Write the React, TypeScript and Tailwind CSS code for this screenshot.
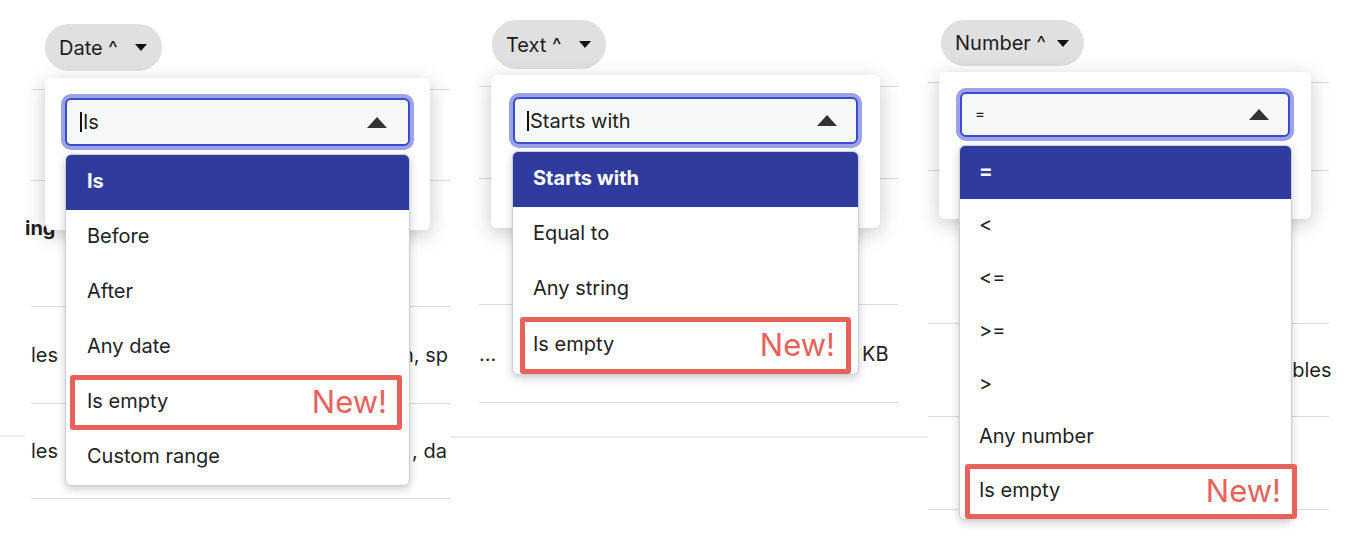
import React from "react";

type Option = { label: string; isNew?: boolean };

const LINE = "border-[#d6dae7]";

function DownTriangle() {
  return (
    <svg width="12" height="7" viewBox="0 0 12 7" className="shrink-0">
      <path d="M0 0H12L6 7Z" fill="#111" />
    </svg>
  );
}

function UpCaret() {
  return (
    <svg width="20" height="11" viewBox="0 0 20 11" className="shrink-0">
      <path d="M0 11L10 0L20 11Z" fill="#333" />
    </svg>
  );
}

function Chip({ label, className }: { label: string; className: string }) {
  return (
    <div
      className={`flex items-center justify-between rounded-full bg-[#e0e0e0] pl-[14px] pr-[15px] text-[20px] text-[#1d1d1d] ${className}`}
    >
      <span>{label} ^</span>
      <DownTriangle />
    </div>
  );
}

function FilterPopover({
  className,
  cardClass,
  inputClass,
  listClass,
  itemClass,
  itemPad,
  newClass,
  valueClass,
  value,
  cursor,
  options,
}: {
  className: string;
  cardClass: string;
  inputClass: string;
  listClass: string;
  itemClass: string;
  itemPad: string;
  newClass: string;
  valueClass: string;
  value: string;
  cursor?: boolean;
  options: Option[];
}) {
  return (
    <div className={`absolute ${className}`}>
      <div className={`rounded-md bg-white shadow-[0_5px_20px_rgba(0,0,0,0.22)] ${cardClass}`}>
        <div className="relative">
          <div
            className={`flex items-center justify-between rounded-md border-2 border-[#3a4bd0] bg-[#f7f8f8] ring-4 ring-[#9ba3e4] ${inputClass}`}
          >
            <div className="flex items-center">
              {cursor && <span className="mr-[1px] h-[20px] w-[2px] bg-[#111]" />}
              <span className={`text-[#1e1e1e] ${valueClass}`}>{value}</span>
            </div>
            <UpCaret />
          </div>
          <div
            className={`absolute z-10 rounded-md border border-[#c9cee0] bg-white shadow-[0_3px_8px_rgba(0,0,0,0.2)] ${listClass}`}
          >
            {options.map((o, i) =>
              o.isNew ? (
                <div
                  key={o.label}
                  className={`flex items-center justify-between rounded-[3px] border-[5px] border-[#e8615b] bg-white pb-[3px] text-[20px] text-[#222] ${itemClass} ${newClass}`}
                >
                  <span>{o.label}</span>
                  <span className="text-[31px] leading-none text-[#e8615b]">New!</span>
                </div>
              ) : i === 0 ? (
                <div
                  key={o.label}
                  className={`flex items-center rounded-t-[5px] bg-[#2f3c9d] pb-[3px] text-[20px] font-bold text-white ${itemClass} ${itemPad}`}
                >
                  {o.label}
                </div>
              ) : (
                <div
                  key={o.label}
                  className={`flex items-center pb-[3px] text-[20px] text-[#222] ${itemClass} ${itemPad}`}
                >
                  {o.label}
                </div>
              )
            )}
          </div>
        </div>
      </div>
    </div>
  );
}

export default function App() {
  return (
    <div className="flex h-[542px] w-[1350px] items-start overflow-hidden bg-white font-[Inter,sans-serif] text-[#1f1f1f]">
      {/* left edge of the date shot */}
      <div className="h-[437px] w-[25px] shrink-0 border-b-2 border-[#ececec]" />

      {/* Date */}
      <div className="relative w-[425px] shrink-0 overflow-hidden">
        <Chip label="Date" className="ml-[20px] mt-[24px] h-[47px] w-[117px]" />
        <div className="mt-[18px] text-[20px]">
          <div className={`ml-[6px] h-[91px] border-t ${LINE}`} />
          <div className={`ml-[6px] h-[126px] border-t pt-[32px] ${LINE}`}>
            <span className="-ml-[6px] font-bold">ing</span>
          </div>
          <div className={`ml-[6px] flex h-[97px] items-center whitespace-nowrap border-t ${LINE}`}>
            <span className="w-[371px] shrink-0">les</span>
            <span>n, sp</span>
          </div>
          <div className={`ml-[6px] flex h-[96px] items-center whitespace-nowrap border-y ${LINE}`}>
            <span className="w-[381px] shrink-0">les</span>
            <span>, da</span>
          </div>
        </div>
        <FilterPopover
          className="left-[20px] top-[78px] w-[385px]"
          cardClass="p-[20px] pb-[84px]"
          inputClass="h-[48px] pl-[13px] pr-[21px]"
          listClass="left-0 top-[56px] w-full"
          itemClass="h-[55px]"
          itemPad="pl-[21px]"
          newClass="ml-[4px] mr-[7px] pl-[12px] pr-[10px]"
          valueClass="text-[20px]"
          value="Is"
          cursor
          options={[
            { label: "Is" },
            { label: "Before" },
            { label: "After" },
            { label: "Any date" },
            { label: "Is empty", isNew: true },
            { label: "Custom range" },
          ]}
        />
      </div>

      {/* Text */}
      <div className="relative h-[438px] w-[478px] shrink-0 border-b-2 border-[#ececec]">
        <Chip label="Text" className="ml-[42px] mt-[20px] h-[49px] w-[114px]" />
        <div className="ml-[29px] mt-[17px] w-[419px] text-[20px]">
          <div className={`h-[92px] border-t ${LINE}`} />
          <div className={`h-[126px] border-t ${LINE}`} />
          <div className={`flex h-[99px] items-center whitespace-nowrap border-y ${LINE}`}>
            <span className="w-[383px] shrink-0">...</span>
            <span>KB</span>
          </div>
        </div>
        <FilterPopover
          className="left-[41px] top-[75px] w-[389px]"
          cardClass="p-[22px] pb-[84px]"
          inputClass="h-[47px] pl-[12px] pr-[19px]"
          listClass="-left-[1px] top-[54px] w-[347px]"
          itemClass="h-[55px]"
          itemPad="pl-[20px]"
          newClass="mx-[7px] h-[57px] pl-[8px] pr-[11px]"
          valueClass="text-[20px]"
          value="Starts with"
          cursor
          options={[
            { label: "Starts with" },
            { label: "Equal to" },
            { label: "Any string" },
            { label: "Is empty", isNew: true },
          ]}
        />
      </div>

      {/* Number */}
      <div className="relative w-[422px] shrink-0">
        <Chip label="Number" className="ml-[13px] mt-[20px] h-[46px] w-[143px]" />
        <div className="mt-[16px] w-[401px] text-[20px]">
          <div className={`h-[88px] border-t ${LINE}`} />
          <div className={`h-[153px] border-t ${LINE}`} />
          <div className={`flex h-[93px] items-center whitespace-nowrap border-t ${LINE}`}>
            <span className="w-[353px] shrink-0" />
            <span>ables</span>
          </div>
          <div className={`h-[94px] border-y ${LINE}`} />
        </div>
        <FilterPopover
          className="left-[11px] top-[72px] w-[372px]"
          cardClass="px-[21px] pt-[20px] pb-[82px]"
          inputClass="h-[45px] pl-[13px] pr-[19px]"
          listClass="-left-[1px] top-[53px] w-[333px]"
          itemClass="h-[53px]"
          itemPad="pl-[19px]"
          newClass="ml-[5px] -mr-[6px] h-[55px] pl-[9px] pr-[11px]"
          valueClass="text-[15px]"
          value="="
          options={[
            { label: "=" },
            { label: "<" },
            { label: "<=" },
            { label: ">=" },
            { label: ">" },
            { label: "Any number" },
            { label: "Is empty", isNew: true },
          ]}
        />
      </div>
    </div>
  );
}
